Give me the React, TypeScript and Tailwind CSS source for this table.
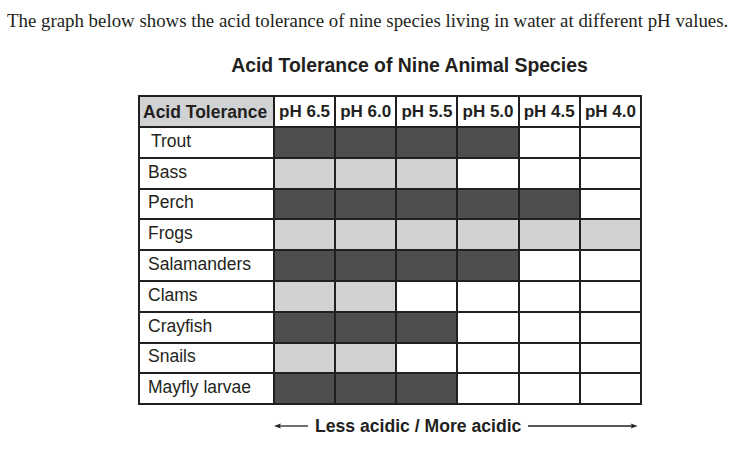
const D = "bg-[#4d4e50]";
const L = "bg-[#d1d2d4]";
const W = "bg-white";

const levels = ["pH 6.5", "pH 6.0", "pH 5.5", "pH 5.0", "pH 4.5", "pH 4.0"];

// d = dark, l = light, w = white
const species: { name: string; cells: string; indent?: boolean }[] = [
  { name: "Trout", cells: "ddddww", indent: true },
  { name: "Bass", cells: "lllwww" },
  { name: "Perch", cells: "dddddw" },
  { name: "Frogs", cells: "llllll" },
  { name: "Salamanders", cells: "ddddww" },
  { name: "Clams", cells: "llwwww" },
  { name: "Crayfish", cells: "dddwww" },
  { name: "Snails", cells: "llwwww" },
  { name: "Mayfly larvae", cells: "dddwww" },
];

const fill = (c: string) => (c === "d" ? D : c === "l" ? L : W);

export default function App() {
  return (
    <div className="w-[735px] h-[453px] bg-white text-[#231f20] overflow-hidden">
      <p className="pl-[7px] pt-[8px] text-[18.85px] leading-[26px] font-['Liberation_Serif',serif] whitespace-nowrap">
        The graph below shows the acid tolerance of nine species living in water at different pH values.
      </p>
      <h2 className="mt-[19px] pl-[84px] text-center text-[19.4px] leading-[24px] font-bold font-['Liberation_Sans',Arial,sans-serif]">
        Acid Tolerance of Nine Animal Species
      </h2>
      <table className="ml-[138px] mt-[18px] w-[504px] border-collapse border-2 border-[#231f20] font-['Liberation_Sans',Arial,sans-serif] text-[17.5px] table-fixed">
        <thead>
          <tr className="h-[31px]">
            <th className={`w-[135px] border-2 border-[#231f20] ${L} px-[3px] text-left font-bold leading-[18px] whitespace-nowrap`}>
              Acid Tolerance
            </th>
            {levels.map((lv) => (
              <th key={lv} className="border-2 border-[#231f20] bg-white px-0 text-center text-[17px] font-bold leading-[18px] whitespace-nowrap">
                {lv}
              </th>
            ))}
          </tr>
        </thead>
        <tbody>
          {species.map((s) => (
            <tr key={s.name} className="h-[30.8px]">
              <td className={`border-2 border-[#231f20] bg-white ${s.indent ? "pl-[11px]" : "pl-[8px]"} pb-[3px] leading-[18px] whitespace-nowrap`}>
                {s.name}
              </td>
              {s.cells.split("").map((c, i) => (
                <td key={i} className={`border-2 border-[#231f20] ${fill(c)}`} />
              ))}
            </tr>
          ))}
        </tbody>
      </table>
      <div className="ml-[274px] mt-[11px] flex w-[364px] items-center font-['Liberation_Sans',Arial,sans-serif]">
        <svg width="34" height="8" viewBox="0 0 34 8" className="shrink-0">
          <line x1="3" y1="4" x2="34" y2="4" stroke="#231f20" strokeWidth="1.3" />
          <path d="M0 4 L7 1.5 L5.5 4 L7 6.5 Z" fill="#231f20" />
        </svg>
        <span className="mx-[7px] text-[17.6px] leading-[20px] font-bold whitespace-nowrap">Less acidic / More acidic</span>
        <svg viewBox="0 0 110 8" height="8" className="flex-1" preserveAspectRatio="none">
          <line x1="0" y1="4" x2="107" y2="4" stroke="#231f20" strokeWidth="1.3" />
          <path d="M110 4 L103 1.5 L104.5 4 L103 6.5 Z" fill="#231f20" />
        </svg>
      </div>
    </div>
  );
}
